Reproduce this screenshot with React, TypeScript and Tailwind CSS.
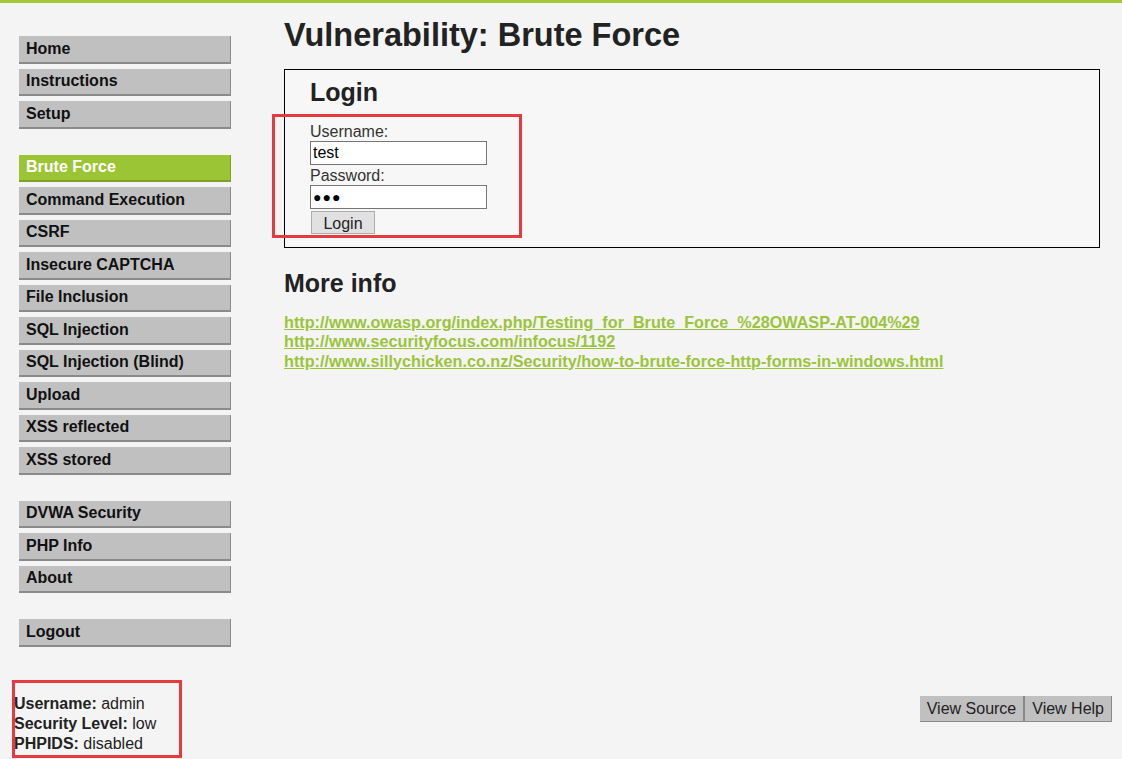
import React from "react";

const groups: { label: string; active?: boolean }[][] = [
  [{ label: "Home" }, { label: "Instructions" }, { label: "Setup" }],
  [
    { label: "Brute Force", active: true },
    { label: "Command Execution" },
    { label: "CSRF" },
    { label: "Insecure CAPTCHA" },
    { label: "File Inclusion" },
    { label: "SQL Injection" },
    { label: "SQL Injection (Blind)" },
    { label: "Upload" },
    { label: "XSS reflected" },
    { label: "XSS stored" },
  ],
  [{ label: "DVWA Security" }, { label: "PHP Info" }, { label: "About" }],
  [{ label: "Logout" }],
];

const links = [
  "http://www.owasp.org/index.php/Testing_for_Brute_Force_%28OWASP-AT-004%29",
  "http://www.securityfocus.com/infocus/1192",
  "http://www.sillychicken.co.nz/Security/how-to-brute-force-http-forms-in-windows.html",
];

export default function App() {
  return (
    <div className="relative flex h-[759px] flex-col overflow-hidden bg-[#f4f4f4] font-['Liberation_Sans',Arial,sans-serif] text-[#222]">
      <div className="h-[3px] bg-[#a2c83a]" />
      <div className="flex flex-1">
        <nav className="w-[284px] shrink-0 pl-[19px] pt-[33px]">
          <div className="flex w-[212px] flex-col gap-[26px]">
            {groups.map((g, gi) => (
              <ul key={gi} className="flex flex-col gap-[5px]">
                {g.map((it) => (
                  <li
                    key={it.label}
                    className={
                      it.active
                        ? "flex h-[27.5px] items-center border-b-2 border-r border-[#7f9f2a] bg-[#9cc535] pl-[7px] text-[16px] font-bold text-white"
                        : "flex h-[27.5px] items-center border-b-2 border-r border-[#8a8a8a] bg-[#c0c0c0] pl-[7px] text-[16px] font-bold text-[#111]"
                    }
                  >
                    {it.label}
                  </li>
                ))}
              </ul>
            ))}
          </div>
        </nav>
        <main className="flex-1 pr-[22px]">
          <h1 className="mt-[13px] text-[32.5px] font-bold leading-[38px] text-[#222]">
            Vulnerability: Brute Force
          </h1>
          <div className="mt-[15px] border border-black bg-[#f7f7f7] pb-[13px] pl-[25px] pt-[7px]">
            <h2 className="text-[25px] font-bold leading-[30px] text-[#222]">Login</h2>
            <div className="mt-[15px] flex flex-col items-start">
              <label className="text-[16px] leading-[19px] text-[#333]">Username:</label>
              <input
                readOnly
                value="test"
                className="h-[24px] w-[177px] border border-[#767676] bg-white px-[2px] text-[16px] text-black outline-none"
              />
              <label className="mt-[1px] text-[16px] leading-[19px] text-[#333]">Password:</label>
              <div className="flex h-[24px] w-[177px] items-center border border-[#767676] bg-white px-[2px] text-[14px] tracking-[1px] text-black">
                ●●●
              </div>
              <button className="ml-[1px] mt-[2px] h-[23px] w-[64px] border border-[#adadad] bg-[#e1e1e1] text-[16px] text-[#222]">
                Login
              </button>
            </div>
          </div>
          <h2 className="mt-[20px] text-[25px] font-bold leading-[30px] text-[#222]">More info</h2>
          <ul className="mt-[14.5px] flex flex-col">
            {links.map((l) => (
              <li key={l} className="text-[16.2px] font-bold leading-[19.5px]">
                <a href="#" className="text-[#9bc43b] underline">
                  {l}
                </a>
              </li>
            ))}
          </ul>
        </main>
      </div>
      <footer className="flex h-[65px] items-start justify-between">
        <div className="pl-[14px] text-[16px] leading-[20px] text-[#222]">
          <div>
            <b>Username:</b> admin
          </div>
          <div>
            <b>Security Level:</b> low
          </div>
          <div>
            <b>PHPIDS:</b> disabled
          </div>
        </div>
        <div className="mr-[10px] mt-[2px] flex">
          <button className="h-[26px] border-b border-r-2 border-[#8a8a8a] bg-[#c0c0c0] px-[7px] text-[16px] text-[#222]">
            View Source
          </button>
          <button className="h-[26px] border-b border-r border-[#8a8a8a] bg-[#c0c0c0] px-[7px] text-[16px] text-[#222]">
            View Help
          </button>
        </div>
      </footer>
      <div className="pointer-events-none absolute left-[272px] top-[114px] h-[124px] w-[250px] border-[3px] border-[#e53b3f]" />
      <div className="pointer-events-none absolute left-[12px] top-[680px] h-[78px] w-[170px] border-[3px] border-[#e53b3f]" />
    </div>
  );
}
